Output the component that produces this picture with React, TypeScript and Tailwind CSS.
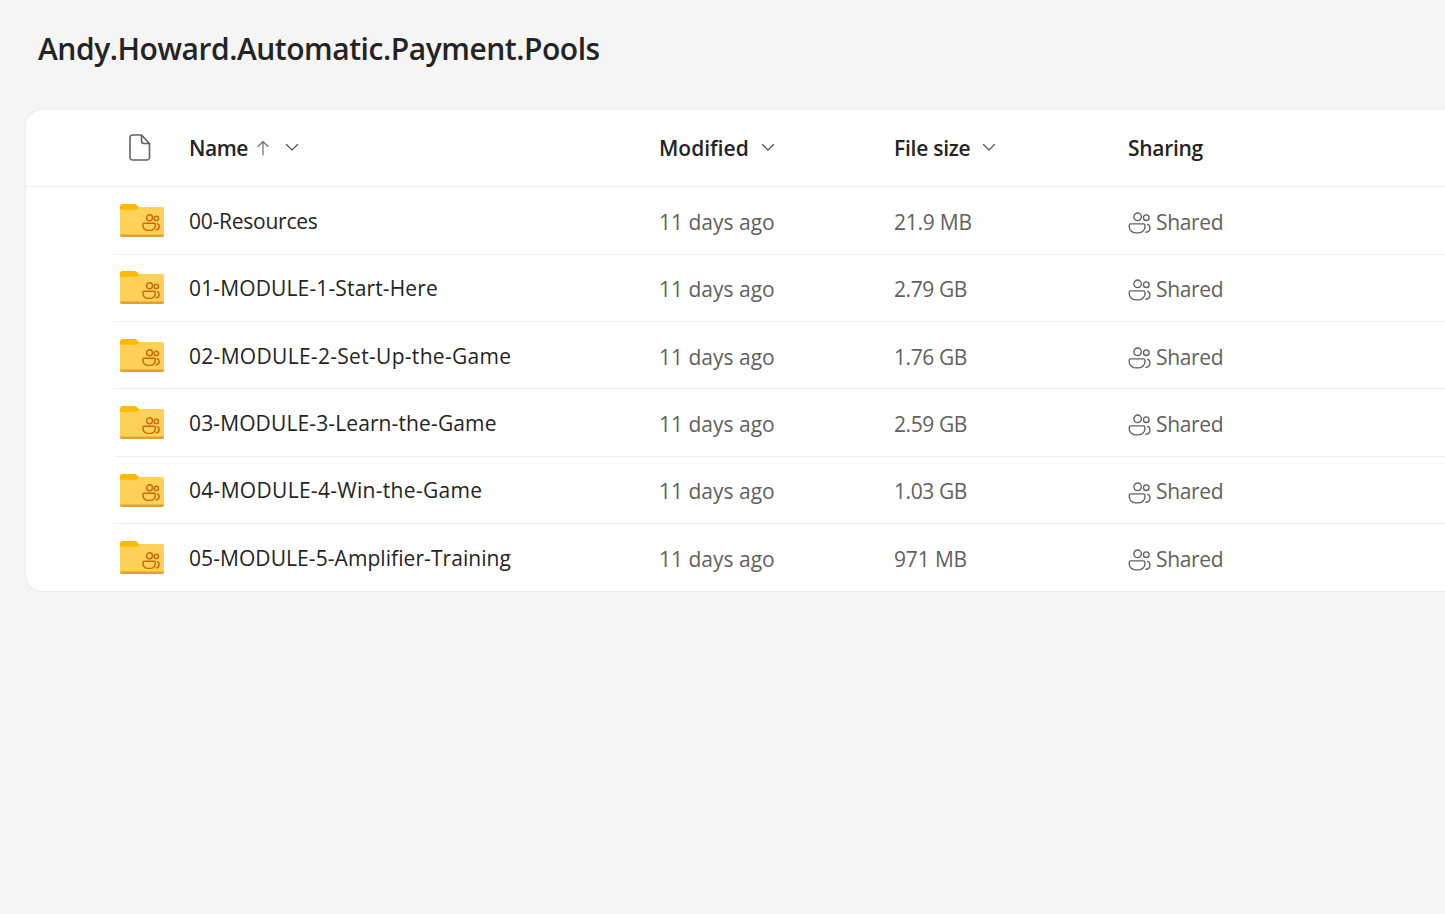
const rows = [
  { name: "00-Resources", size: "21.9 MB", track: "tracking-[-0.25px]", sizeTrack: "tracking-[-0.25px]" },
  { name: "01-MODULE-1-Start-Here", size: "2.79 GB", track: "tracking-[0.14px]", sizeTrack: "tracking-[-0.4px]" },
  { name: "02-MODULE-2-Set-Up-the-Game", size: "1.76 GB", track: "tracking-[0.3px]", sizeTrack: "tracking-[-0.4px]" },
  { name: "03-MODULE-3-Learn-the-Game", size: "2.59 GB", track: "tracking-[0.12px]", sizeTrack: "tracking-[-0.4px]" },
  { name: "04-MODULE-4-Win-the-Game", size: "1.03 GB", track: "tracking-[0.3px]", sizeTrack: "tracking-[-0.4px]" },
  { name: "05-MODULE-5-Amplifier-Training", size: "971 MB", track: "tracking-[0.07px]", sizeTrack: "tracking-[-0.15px]" },
];

function Chevron() {
  return (
    <svg width="14" height="14" viewBox="0 0 14 14" fill="none" className="shrink-0">
      <path d="M1.5 4.5 L7 10 L12.5 4.5" stroke="#555" strokeWidth="1.2" strokeLinecap="round" strokeLinejoin="round" />
    </svg>
  );
}

function People({ color, size, sw }: { color: string; size: number; sw: number }) {
  return (
    <svg width={size} height={size} viewBox="0 0 22 22" fill="none" className="block">
      <circle cx="9.2" cy="4.6" r="3.6" stroke={color} strokeWidth={sw} />
      <circle cx="17.5" cy="5.4" r="2.7" stroke={color} strokeWidth={sw} />
      <path d="M2.4 11.4 H15 A1.2 1.2 0 0 1 16.2 12.6 V14 A6 6 0 0 1 10.2 20 H7.2 A6 6 0 0 1 1.2 14 V12.6 A1.2 1.2 0 0 1 2.4 11.4 Z" stroke={color} strokeWidth={sw} />
      <path d="M17.2 19.4 C19.6 19 21 17.4 21 15.2 C21 13.5 20.1 12.3 18.8 11.9" stroke={color} strokeWidth={sw} strokeLinecap="round" />
    </svg>
  );
}

function Folder() {
  return (
    <div className="relative w-[45px] h-[35px]">
      <svg width="45" height="35" viewBox="0 0 45 35" className="block">
        <path d="M0 3.5 A2.5 2.5 0 0 1 2.5 1 H14.5 A3 3 0 0 1 16.7 1.9 L20.5 5.6 V7 H0 Z" fill="#FFB900" />
        <path d="M0 6.8 H16 A2.5 2.5 0 0 0 17.8 6 L19.8 4 H42 A2 2 0 0 1 44 6 V32 A2 2 0 0 1 42 34 H2 A2 2 0 0 1 0 32 Z" fill="#FFD257" />
        <path d="M0 31.6 H44 V32 A2 2 0 0 1 42 34 H2 A2 2 0 0 1 0 32 Z" fill="#E3A02E" />
      </svg>
      <div className="absolute left-[21.5px] top-[11.5px]">
        <People color="#C9690F" size={18} sw={1.8} />
      </div>
    </div>
  );
}

export default function App() {
  return (
    <div className="w-[1445px] h-[914px] overflow-hidden bg-[#f5f5f5] font-['Open_Sans','Noto_Sans',sans-serif] text-[#242424]">
      <h1 className="h-[110px] pl-[38px] pt-[29px] text-[30px] leading-[40px] font-semibold tracking-[-0.46px]">
        Andy.Howard.Automatic.Payment.Pools
      </h1>
      <div className="ml-[26px] w-[1440px] rounded-2xl bg-white shadow-[0_0_2px_rgba(0,0,0,0.12)]">
        <div className="grid grid-cols-[88px_75px_470px_235px_234px_1fr] h-[77.3px] pt-[2px] items-center border-b border-[#f0f0f0] text-[21px] font-semibold">
          <div />
          <div className="pl-[15px] -mt-[4px]">
            <svg width="22" height="27" viewBox="0 0 22 27" fill="none" className="block">
              <path d="M3.5 1 H12.5 L20.5 9.5 V23.5 A2.5 2.5 0 0 1 18 26 H3.5 A2.5 2.5 0 0 1 1 23.5 V3.5 A2.5 2.5 0 0 1 3.5 1 Z M12.5 1 V7 A2.5 2.5 0 0 0 15 9.5 H20.5" stroke="#616161" strokeWidth="1.6" strokeLinejoin="round" />
            </svg>
          </div>
          <div className="flex items-center">
            <span className="tracking-[-0.45px]">Name</span>
            <svg width="14" height="16" viewBox="0 0 14 16" fill="none" className="ml-[8px] -mt-[2px]">
              <path d="M7 15 V1.5 M2 6.5 L7 1.5 L12 6.5" stroke="#707070" strokeWidth="1.2" strokeLinecap="round" strokeLinejoin="round" />
            </svg>
            <span className="ml-[15px] -mt-[4px]"><Chevron /></span>
          </div>
          <div className="flex items-center gap-[12px]">
            <span>Modified</span>
            <span className="-mt-[4px]"><Chevron /></span>
          </div>
          <div className="flex items-center gap-[12px]">
            <span className="tracking-[-0.25px]">File size</span>
            <span className="-mt-[4px]"><Chevron /></span>
          </div>
          <div className="tracking-[-0.3px]">Sharing</div>
        </div>
        <div className="ml-[88px]">
          {rows.map((r, i) => (
            <div key={r.name} className={`grid grid-cols-[75px_470px_235px_234px_1fr] items-center text-[21px] ${i < rows.length - 1 ? "h-[67.4px] border-b border-[#f0f0f0]" : "h-[66.6px]"}`}>
              <div className="pl-[6px]"><Folder /></div>
              <div className={`pt-[2px] ${r.track}`}>{r.name}</div>
              <div className="pt-[4px] text-[#616161]">11 days ago</div>
              <div className={`pt-[4px] text-[#616161] ${r.sizeTrack}`}>{r.size}</div>
              <div className="pt-[4px] flex items-center text-[#616161]">
                <span className="mt-[2px]"><People color="#616161" size={23} sw={1.3} /></span>
                <span className="ml-[5px] tracking-[-0.35px]">Shared</span>
              </div>
            </div>
          ))}
        </div>
      </div>
    </div>
  );
}
